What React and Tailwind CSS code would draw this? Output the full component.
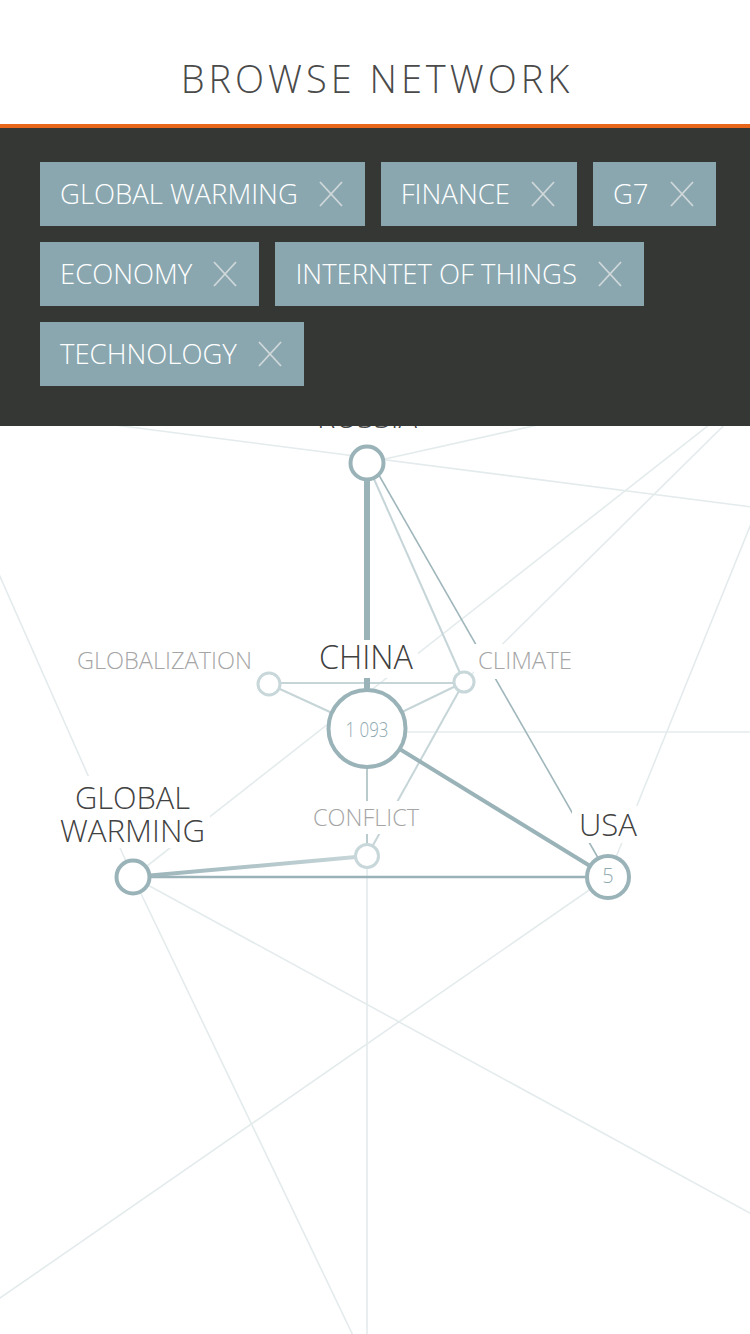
import React from "react";

const FONT = '"Open Sans", "Noto Sans", "Liberation Sans", sans-serif';

const TAGS = [
  "GLOBAL WARMING",
  "FINANCE",
  "G7",
  "ECONOMY",
  "INTERNTET OF THINGS",
  "TECHNOLOGY",
];

function CloseIcon() {
  return (
    <svg width="24" height="26" viewBox="0 0 24 26" className="shrink-0">
      <line x1="1" y1="1" x2="23" y2="25" stroke="#cfd7d9" strokeWidth="1.8" />
      <line x1="23" y1="1" x2="1" y2="25" stroke="#cfd7d9" strokeWidth="1.8" />
    </svg>
  );
}

function Tag({ label }) {
  return (
    <div className="h-16 bg-[#8aa7b0] flex items-center pl-5 pr-[22px] gap-[21px]">
      <span className="text-[27.5px] font-light text-white leading-none whitespace-nowrap">
        {label}
      </span>
      <CloseIcon />
    </div>
  );
}

const BG = "#e4ebec";
const LIGHT = "#c6d5d8";
const MID = "#9fb6bb";
const STRONG = "#9ab3b8";

const bgLines = [
  [-10, 409, 760, 508],
  [367, 463, 560, 420],
  [133, 877, 760, 385],
  [464, 682, 780, 370],
  [608, 877, 770, 477],
  [133, 877, -10, 554],
  [133, 877, 360, 1350],
  [133, 877, 770, 1224],
  [608, 877, -10, 1305],
  [367, 856, 367, 1340],
  [367, 732, 760, 732],
];

const lightLines = [
  [269, 683, 464, 683],
  [269, 684, 367, 729],
  [464, 682, 367, 729],
  [370, 470, 464, 682],
  [464, 682, 367, 856],
];

function Label({ x, y, w, size, fill, anchor = "middle", text, box }) {
  return (
    <g>
      {box && <rect x={box[0]} y={box[1]} width={box[2]} height={box[3]} fill="#ffffff" />}
      <text
        x={x}
        y={y}
        fontSize={size}
        fill={fill}
        textAnchor={anchor}
        fontWeight="300"
        textLength={w}
        lengthAdjust="spacingAndGlyphs"
        style={{ fontFamily: FONT }}
      >
        {text}
      </text>
    </g>
  );
}

function Network() {
  return (
    <svg
      className="absolute left-0 top-0"
      width="750"
      height="1206"
      viewBox="0 128 750 1206"
    >
      <defs>
        <linearGradient id="gwc" x1="133" y1="877" x2="367" y2="856" gradientUnits="userSpaceOnUse">
          <stop offset="0" stopColor="#9ab3b8" />
          <stop offset="1" stopColor="#c8d7da" />
        </linearGradient>
      </defs>
      {bgLines.map((l, i) => (
        <line key={"b" + i} x1={l[0]} y1={l[1]} x2={l[2]} y2={l[3]} stroke={BG} strokeWidth="1.6" />
      ))}
      {lightLines.map((l, i) => (
        <line key={"l" + i} x1={l[0]} y1={l[1]} x2={l[2]} y2={l[3]} stroke={LIGHT} strokeWidth="2" />
      ))}
      {/* mid edges */}
      <line x1="372" y1="463" x2="609" y2="877" stroke={MID} strokeWidth="1.6" />
      <line x1="367" y1="729" x2="367" y2="856" stroke="#a9bec2" strokeWidth="1.6" />
      {/* strong edges */}
      <line x1="367" y1="463" x2="367" y2="729" stroke={STRONG} strokeWidth="6" />
      <line x1="367" y1="729" x2="608" y2="877" stroke={STRONG} strokeWidth="4" />
      <line x1="133" y1="877" x2="608" y2="877" stroke={STRONG} strokeWidth="2.5" />
      <path d="M133 875 L367 854 L367 858 L133 879 Z" fill="url(#gwc)" />

      {/* labels with white boxes */}
      <Label x={367} y={428} w={100} size={33} fill="#454545" text="RUSSIA" box={[312, 398, 110, 40]} />
      <Label x={366} y={669} w={94} size={33} fill="#404040" text="CHINA" box={[314, 640, 104, 38]} />
      <Label x={77} y={669} w={175} size={23} fill="#a5a5a5" anchor="start" text="GLOBALIZATION" box={[72, 645, 185, 33]} />
      <Label x={478} y={669} w={94} size={23} fill="#a5a5a5" anchor="start" text="CLIMATE" box={[474, 644, 102, 35]} />
      <Label x={366} y={826} w={106} size={23} fill="#a5a5a5" text="CONFLICT" box={[309, 801, 114, 33]} />
      <Label x={608} y={836} w={58} size={32} fill="#424242" text="USA" box={[572, 806, 73, 37]} />
      <rect x="55" y="776" width="155" height="72" fill="#ffffff" />
      <Label x={132.5} y={809} w={115} size={31} fill="#424242" text="GLOBAL" />
      <Label x={132.5} y={842} w={145} size={31} fill="#424242" text="WARMING" />

      {/* nodes */}
      <circle cx="367" cy="463" r="16.5" fill="#ffffff" stroke={STRONG} strokeWidth="4" />
      <circle cx="367" cy="728.5" r="38.5" fill="#ffffff" stroke={STRONG} strokeWidth="4" />
      <circle cx="133" cy="877" r="16.5" fill="#ffffff" stroke={STRONG} strokeWidth="4" />
      <circle cx="608" cy="877" r="21" fill="#ffffff" stroke={STRONG} strokeWidth="4" />
      <circle cx="269" cy="684" r="11" fill="#ffffff" stroke="#c8d7da" strokeWidth="3" />
      <circle cx="464" cy="682" r="10" fill="#ffffff" stroke="#c8d7da" strokeWidth="3" />
      <circle cx="367" cy="856" r="11.5" fill="#ffffff" stroke="#c8d7da" strokeWidth="3" />

      <Label x={367} y={737} w={43} size={20} fill="#8ea9b0" text="1 093" />
      <text x="608" y="883" fontSize="20" fill="#8ea9b0" textAnchor="middle" fontWeight="300" style={{ fontFamily: FONT }}>
        5
      </text>
    </svg>
  );
}

export default function App() {
  return (
    <div className="relative w-[750px] h-[1334px] overflow-hidden bg-white flex flex-col" style={{ fontFamily: FONT }}>
      <header className="h-[124px] shrink-0 pt-[59px] flex justify-center">
        <h1 className="text-[38px] leading-[38px] font-light text-[#4a4a4a] tracking-[0.105em] pl-[0.105em] whitespace-nowrap">
          BROWSE NETWORK
        </h1>
      </header>
      <div className="h-1 shrink-0 bg-[#e8661a]" />
      <div className="relative flex-1">
        <Network />
        <div className="relative bg-[#343733] pt-[34px] pb-10 pl-10 pr-[28px] flex flex-wrap gap-4">
          {TAGS.map((t) => (
            <Tag key={t} label={t} />
          ))}
        </div>
      </div>
    </div>
  );
}
